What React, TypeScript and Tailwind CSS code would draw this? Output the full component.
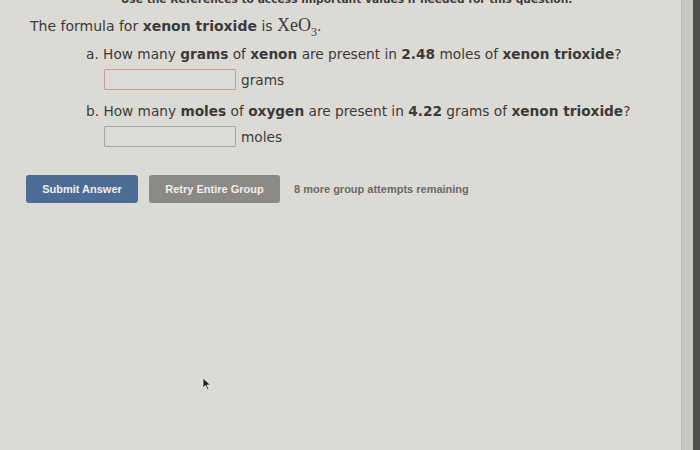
import React from "react";

export default function App() {
  return (
    <div className="w-[700px] h-[450px] overflow-hidden flex bg-[#dcdad4]">
      <div className="relative shrink-0 w-[681px] h-full bg-[#dcdad4] text-[#3a3a3a] [font-family:'DejaVu_Sans',Verdana,sans-serif]">
        <div className="h-[6px] overflow-hidden flex justify-center">
          <div className="mt-[-7px] pl-[12px] text-[10.7px] leading-[13px] font-bold text-[#3e3e3e] whitespace-nowrap">
            Use the References to access important values if needed for this question.
          </div>
        </div>
        <div className="pl-[30px] pt-[10px] text-[14px] leading-[18px] whitespace-nowrap">
          The formula for <b>xenon trioxide</b> is{" "}
          <span className="[font-family:'Liberation_Serif',serif] text-[18px]">
            XeO<sub className="text-[12px] align-[-2px]">3</sub>
          </span>
          .
        </div>
        <div className="pl-[86px] pt-[10px] text-[13.7px] leading-[18px] whitespace-nowrap">
          a. How many <b>grams</b> of <b>xenon</b> are present in <b>2.48</b> moles of <b>xenon trioxide</b>?
        </div>
        <div className="pl-[104px] pt-[6px] flex items-center gap-[5px]">
          <div className="w-[132px] h-[21px] border border-[#d0979a] rounded-[1px] bg-[#dddbd6]" />
          <span className="text-[13.7px] leading-[18px]">grams</span>
        </div>
        <div className="pl-[86px] pt-[12px] text-[13.7px] leading-[18px] whitespace-nowrap">
          b. How many <b>moles</b> of <b>oxygen</b> are present in <b>4.22</b> grams of <b>xenon trioxide</b>?
        </div>
        <div className="pl-[104px] pt-[6px] flex items-center gap-[5px]">
          <div className="w-[132px] h-[21px] border border-[#a6a5a2] rounded-[1px] bg-[#dddbd6]" />
          <span className="text-[13.7px] leading-[18px]">moles</span>
        </div>
        <div className="pl-[26px] pt-[28px] flex items-center [font-family:'Liberation_Sans',Arial,sans-serif] font-bold">
          <div className="w-[112px] h-[28px] rounded-[3px] bg-[#4d6c95] text-[#eef0f2] text-[11px] flex items-center justify-center">
            Submit Answer
          </div>
          <div className="ml-[11px] w-[131px] h-[28px] rounded-[3px] bg-[#8b8985] text-[#f0efec] text-[11px] flex items-center justify-center">
            Retry Entire Group
          </div>
          <div className="ml-[14px] text-[11px] text-[#6b6a67]">8 more group attempts remaining</div>
        </div>
        <svg className="absolute left-[202px] top-[377px]" width="10" height="14" viewBox="0 0 10 14">
          <path d="M1 1 L1 11 L3.5 8.5 L5.5 13 L7 12.3 L5 8 L8.5 8 Z" fill="#222" stroke="#eee" strokeWidth="0.8" />
        </svg>
      </div>
      <div className="shrink-0 w-[12px] h-full bg-[#c9c7c2] border-l border-[#b9b7b2]" />
      <div className="shrink-0 w-[7px] h-full bg-[#4e4e4e]" />
    </div>
  );
}
